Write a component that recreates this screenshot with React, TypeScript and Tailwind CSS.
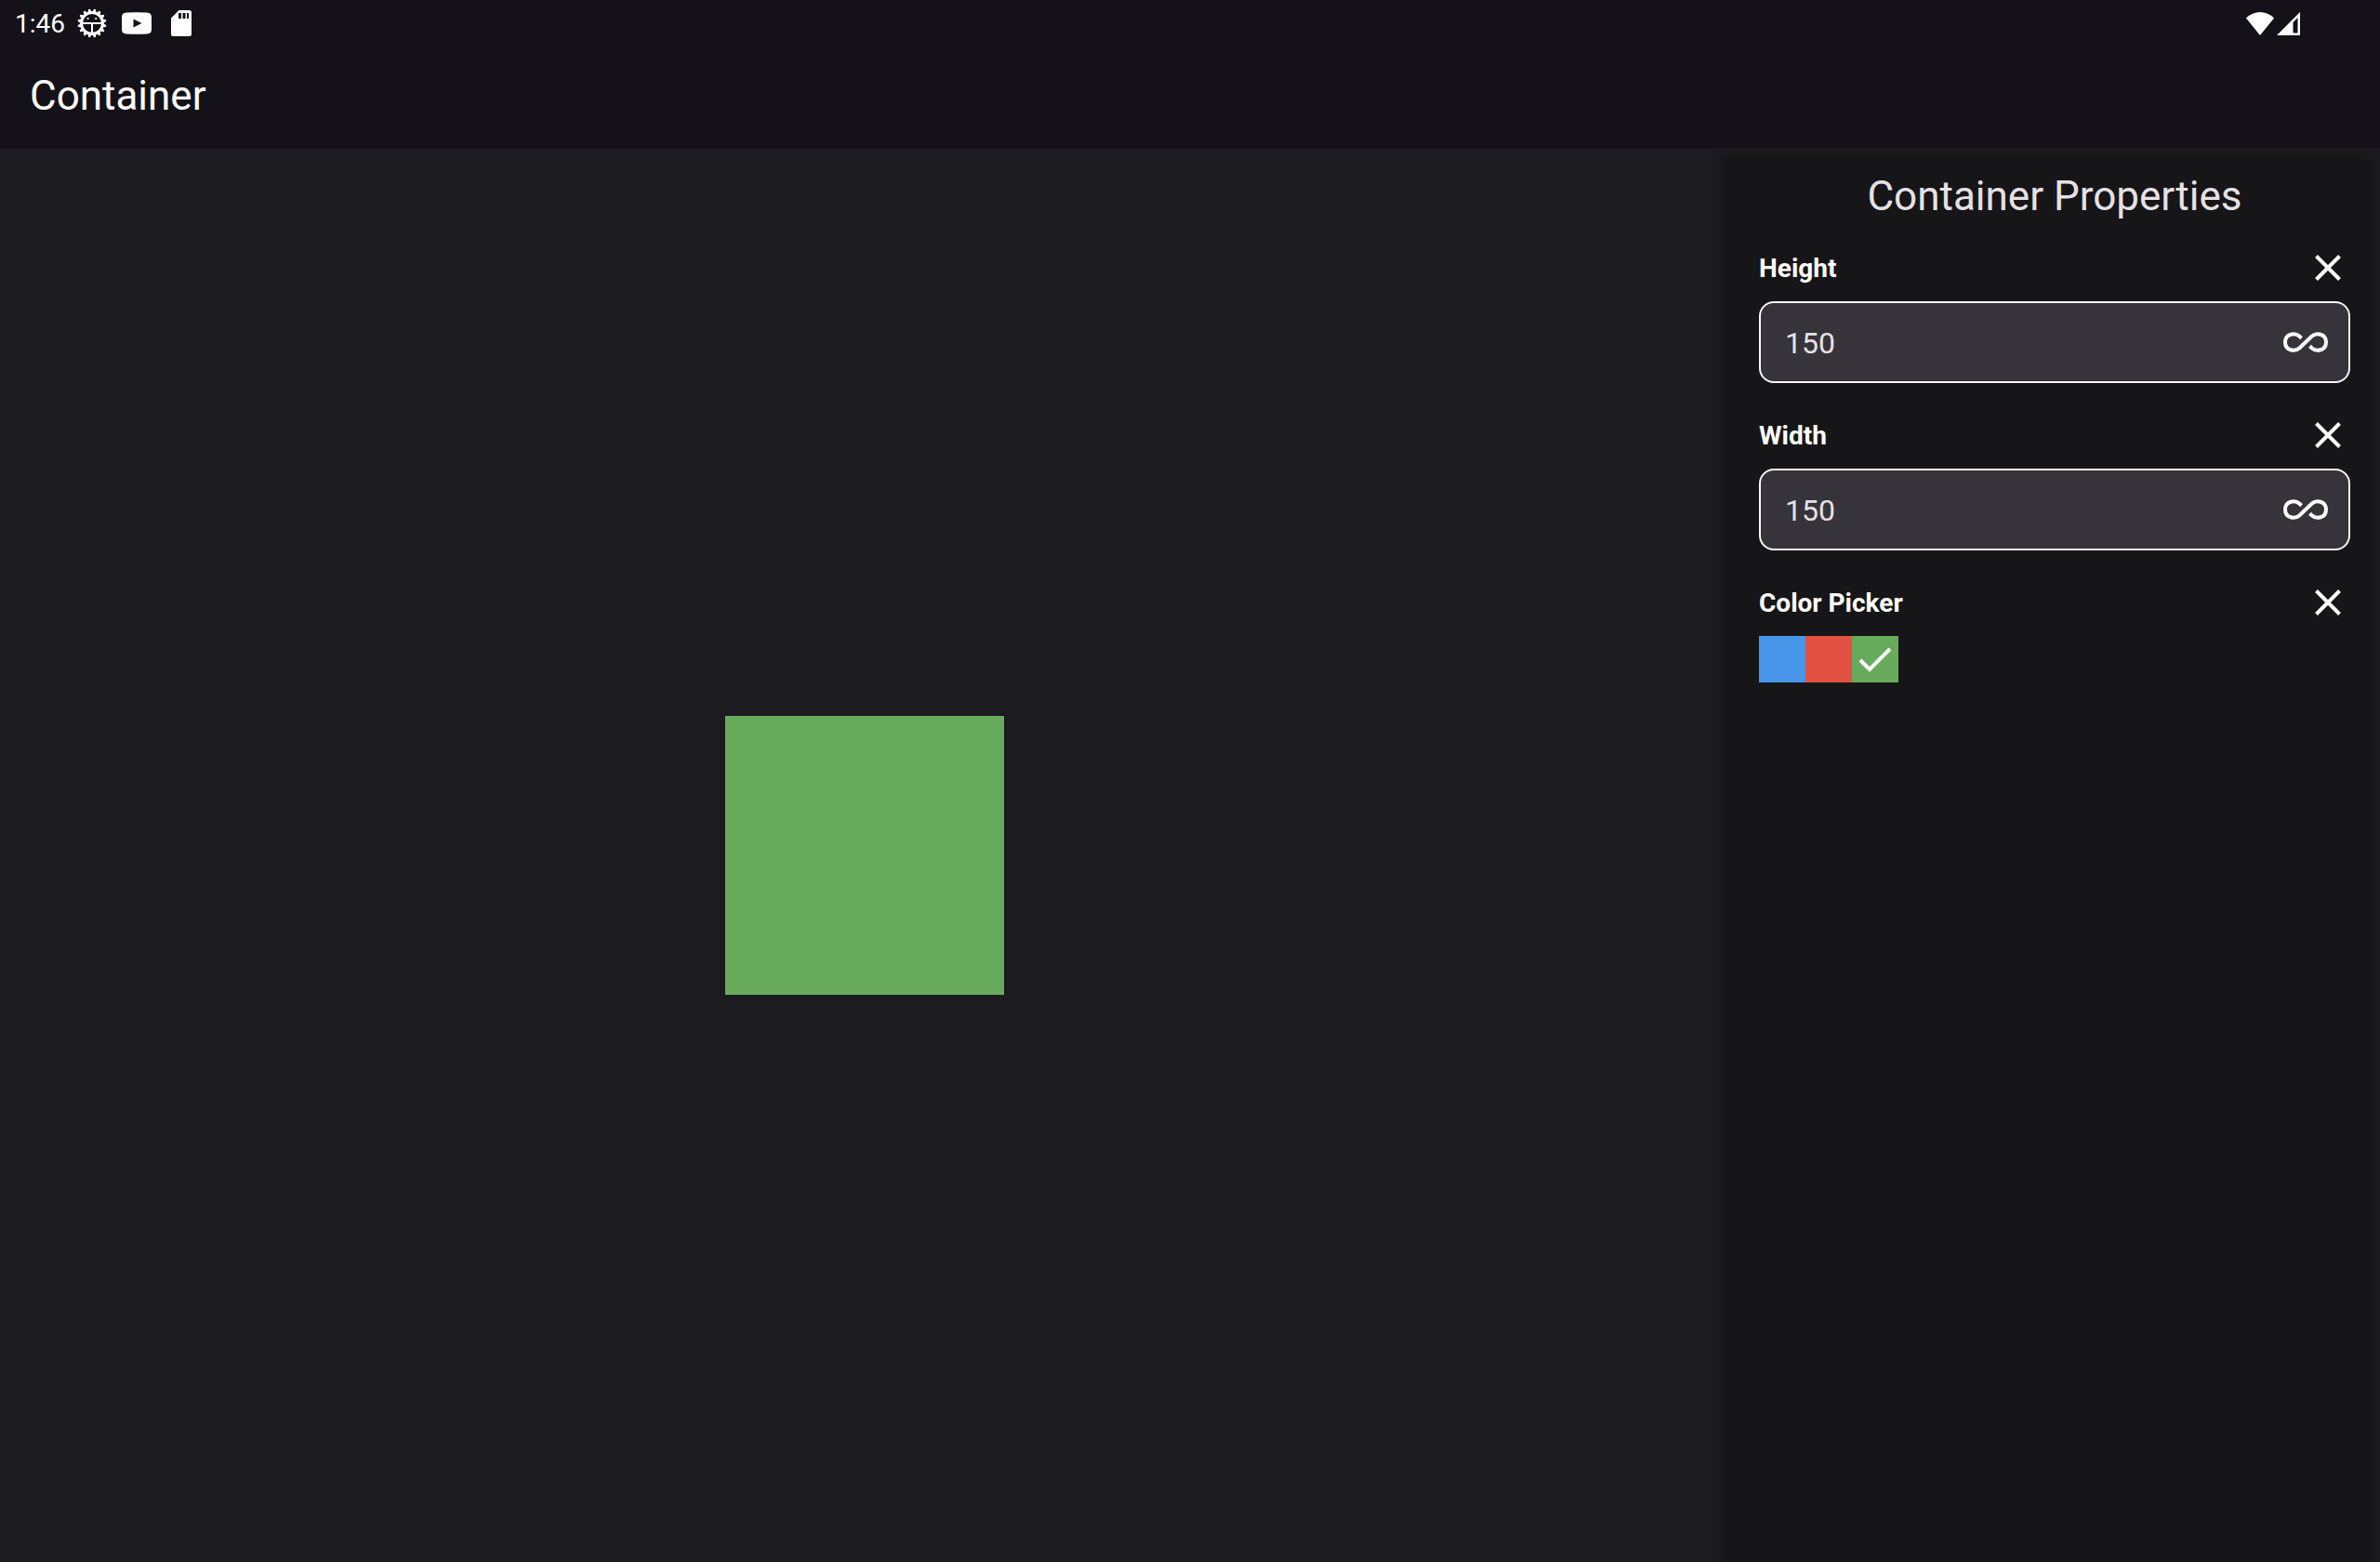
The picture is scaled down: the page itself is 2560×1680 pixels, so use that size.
import { useState } from "react";
import type { ReactNode } from "react";

const swatches = [
  { name: "Blue", value: "#4796ea", bg: "bg-[#4796ea]" },
  { name: "Red", value: "#e25142", bg: "bg-[#e25142]" },
  { name: "Green", value: "#69ab5c", bg: "bg-[#69ab5c]" },
];

function DebugIcon() {
  const teeth = Array.from({ length: 16 }, (_, i) => i * 22.5 + 11.25);
  return (
    <svg viewBox="-16 -16 32 32" className="size-8" aria-hidden="true">
      <circle r="11.4" fill="none" stroke="#fff" strokeWidth="2.8" />
      {teeth.map((a) => (
        <path key={a} d="M-1.7 -12 L-0.5 -15 H0.5 L1.7 -12 Z" fill="#fff" stroke="#fff" strokeWidth="1" strokeLinejoin="round" transform={`rotate(${a})`} />
      ))}
      <path d="M-11 0H11M0 0v12" stroke="#fff" strokeWidth="2" fill="none" />
      <circle cx="-4.4" cy="-5" r="1.1" fill="#fff" />
      <circle cx="4.2" cy="-5" r="1.1" fill="#fff" />
    </svg>
  );
}

function StatusBar() {
  return (
    <div className="flex h-12 items-center justify-between pt-[2px] pr-[86px] pl-4">
      <div className="flex items-center">
        <span className="w-[67px] pt-[2px] text-[28px] leading-8">1:46</span>
        <DebugIcon />
        <svg viewBox="0 0 32 24" className="ml-4 h-6 w-8" aria-hidden="true">
          <path fillRule="evenodd" fill="#fff" d="M5 .5Q16-.2 27 .5Q32 .7 32 5.500V18.500Q32 23.300 27 23.500Q16 24.200 5 23.500Q0 23.300 0 18.500V5.500Q0 .7 5 .5ZM12.500 7.500V16.500L21.500 12Z" />
        </svg>
        <svg viewBox="0 0 22 28" className="ml-[21px] h-7 w-[22px]" aria-hidden="true">
          <path fillRule="evenodd" fill="#fff" d="M8.500 0H19.500Q22 0 22 2.500V25.500Q22 28 19.500 28H2.500Q0 28 0 25.500V8.500ZM8 3V9H11V3ZM12.500 3V9H15.500V3ZM17 3V9H19V3Z" />
        </svg>
      </div>
      <div className="flex items-center gap-[3px]">
        <svg viewBox="0 0 30 25" className="h-[25px] w-[30px]" aria-hidden="true">
          <path d="M0 6.500Q6.500 0 15 0T30 6.500L15 25Z" fill="#fff" />
        </svg>
        <svg viewBox="0 0 25 25" className="h-[25px] w-[25px]" aria-hidden="true">
          <path fillRule="evenodd" d="M25 0V25H0ZM22.500 6L17.500 11V22.500H22.500Z" fill="#fff" />
        </svg>
      </div>
    </div>
  );
}

function Row({ label, id, onClear, children }: { label: string; id: string; onClear: () => void; children: ReactNode }) {
  return (
    <div>
      <div className="flex h-12 items-center justify-between">
        <label htmlFor={id} className="pt-[2px] text-[28px] leading-10 font-bold text-white">
          {label}
        </label>
        <button type="button" aria-label={`Clear ${label}`} onClick={onClear} className="flex size-12 items-center justify-center">
          <svg viewBox="0 0 28 28" className="size-7" aria-hidden="true">
            <path d="M1.500 1.500L26.500 26.500M26.500 1.500L1.500 26.500" stroke="#fff" strokeWidth="4" />
          </svg>
        </button>
      </div>
      {children}
    </div>
  );
}

function SizeField({ label, id, value, onChange }: { label: string; id: string; value: string; onChange: (v: string) => void }) {
  return (
    <Row label={label} id={id} onClear={() => onChange("")}>
      <div className="mt-3 flex h-[88px] items-center rounded-2xl border-2 border-[#f7f7f9] bg-[#36333a] pr-[22px] pl-[26px]">
        <input
          id={id}
          value={value}
          onChange={(e) => onChange(e.target.value)}
          className="min-w-0 flex-1 bg-transparent pt-[2px] text-[32px] leading-12 text-[#e6e1e5] outline-none"
        />
        <button type="button" aria-label={`Unlimited ${label}`} onClick={() => onChange("Infinity")} className="flex h-12 w-12 items-center justify-center">
          <svg viewBox="0 0 48 22" className="h-[22px] w-12" aria-hidden="true">
            <path
              d="M19.500 6.700L17.500 4.800C12.500 .2 2 1.800 2 11C2 20.200 12.500 21.800 17.500 17.200L30.500 4.800C35.500 .2 46 1.800 46 11C46 20.200 35.500 21.800 30.500 17.200L28.500 15.300"
              fill="none"
              stroke="#fff"
              strokeWidth="4"
            />
          </svg>
        </button>
      </div>
    </Row>
  );
}

export default function App() {
  const [height, setHeight] = useState("150");
  const [width, setWidth] = useState("150");
  const [color, setColor] = useState("#69ab5c");
  const side = (v: string) => (Number(v) || 150) * 2;

  return (
    <div className="flex min-h-screen flex-col bg-[#1c1b1f] font-['Roboto',sans-serif] text-white">
      <header className="h-40 shrink-0 bg-[#141218]">
        <StatusBar />
        <h1 className="px-8 pt-[27px] text-[44px] leading-[56px]">Container</h1>
      </header>
      <div className="flex flex-1">
        <main className="flex flex-1 items-center justify-center">
          <div style={{ width: side(width), height: side(height), background: color }} />
        </main>
        <aside className="relative isolate w-[700px] px-8 pt-6">
          <div className="absolute inset-y-0 right-0 -left-5 -z-10 overflow-hidden">
            <div className="absolute top-2 right-2 -bottom-8 left-3 bg-[#161618] blur-[5px]" />
          </div>
          <h2 className="text-center text-[44px] leading-[54px] text-[#e6e1e5]">Container Properties</h2>
          <div className="mt-[26px] flex flex-col gap-8">
            <SizeField label="Height" id="height" value={height} onChange={setHeight} />
            <SizeField label="Width" id="width" value={width} onChange={setWidth} />
            <Row label="Color Picker" id="swatch-Blue" onClear={() => setColor("transparent")}>
              <div className="mt-3 flex">
                {swatches.map((s) => (
                  <button
                    key={s.name}
                    id={`swatch-${s.name}`}
                    type="button"
                    aria-label={s.name}
                    aria-pressed={color === s.value}
                    onClick={() => setColor(s.value)}
                    className={`flex size-[50px] items-center justify-center ${s.bg}`}
                  >
                    {color === s.value && (
                      <svg viewBox="0 0 36 28" className="h-7 w-9" aria-hidden="true">
                        <path d="M2 15L12 25L34 3" fill="none" stroke="#fff" strokeWidth="4" />
                      </svg>
                    )}
                  </button>
                ))}
              </div>
            </Row>
          </div>
        </aside>
      </div>
    </div>
  );
}
